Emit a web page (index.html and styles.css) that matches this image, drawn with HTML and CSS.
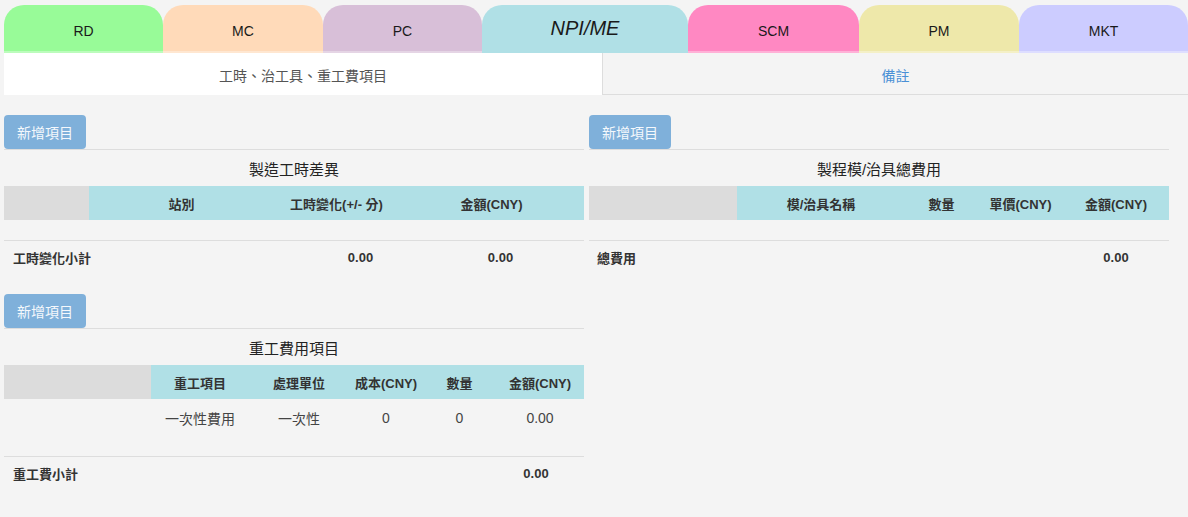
FILE: index.html
```html
<!DOCTYPE html>
<html lang="zh-Hant">
<head>
<meta charset="utf-8">
<title>NPI/ME</title>
<link rel="stylesheet" href="styles.css">
</head>
<body>
<div class="page">
  <nav class="dept-tabs">
    <div class="dept-tab rd">RD</div>
    <div class="dept-tab mc">MC</div>
    <div class="dept-tab pc">PC</div>
    <div class="dept-tab npi active">NPI/ME</div>
    <div class="dept-tab scm">SCM</div>
    <div class="dept-tab pm">PM</div>
    <div class="dept-tab mkt">MKT</div>
  </nav>
  <div class="sub-tabs">
    <div class="sub-tab current">工時、治工具、重工費項目</div>
    <div class="sub-tab other">備註</div>
  </div>
  <main class="content">
    <section class="col">
      <div class="block">
        <button class="add-btn">新增項目</button>
        <div class="table-box">
          <div class="table-title">製造工時差異</div>
          <div class="thead t1">
            <div class="cell gray"></div>
            <div class="cell">站別</div>
            <div class="cell">工時變化(+/- 分)</div>
            <div class="cell">金額(CNY)</div>
          </div>
          <div class="spacer"></div>
          <div class="tfoot f1">
            <div class="label">工時變化小計</div>
            <div class="val">0.00</div>
            <div class="val">0.00</div>
          </div>
        </div>
      </div>
      <div class="block">
        <button class="add-btn">新增項目</button>
        <div class="table-box">
          <div class="table-title">重工費用項目</div>
          <div class="thead t3">
            <div class="cell gray"></div>
            <div class="cell">重工項目</div>
            <div class="cell">處理單位</div>
            <div class="cell">成本(CNY)</div>
            <div class="cell">數量</div>
            <div class="cell">金額(CNY)</div>
          </div>
          <div class="trow t3">
            <div class="cell"></div>
            <div class="cell">一次性費用</div>
            <div class="cell">一次性</div>
            <div class="cell">0</div>
            <div class="cell">0</div>
            <div class="cell">0.00</div>
          </div>
          <div class="spacer short"></div>
          <div class="tfoot f3">
            <div class="label">重工費小計</div>
            <div class="val">0.00</div>
          </div>
        </div>
      </div>
    </section>
    <section class="col">
      <div class="block">
        <button class="add-btn">新增項目</button>
        <div class="table-box">
          <div class="table-title">製程模/治具總費用</div>
          <div class="thead t2">
            <div class="cell gray"></div>
            <div class="cell">模/治具名稱</div>
            <div class="cell">數量</div>
            <div class="cell">單價(CNY)</div>
            <div class="cell">金額(CNY)</div>
          </div>
          <div class="spacer"></div>
          <div class="tfoot t2">
            <div class="label span4">總費用</div>
            <div class="val">0.00</div>
          </div>
        </div>
      </div>
    </section>
  </main>
</div>
</body>
</html>
```
FILE: styles.css
```css
* { box-sizing: border-box; }

body {
  margin: 0;
  background: #f4f4f4;
  font-family: "Liberation Sans", "Noto Sans CJK TC", sans-serif;
  color: #333;
}

.page { padding: 5px 0 0 4px; }

.dept-tabs { display: flex; height: 48px; }

.dept-tab {
  display: flex;
  align-items: center;
  justify-content: center;
  padding-top: 4px;
  border-radius: 20px 20px 0 0;
  font-size: 14px;
  color: #1a1a1a;
  box-shadow: inset 0 -2px 0 rgba(255, 255, 255, 0.35);
}
.dept-tab.rd { flex: 0 0 159px; background: #98fb98; }
.dept-tab.mc { flex: 0 0 160px; background: #ffdab9; }
.dept-tab.pc { flex: 0 0 159px; background: #d8bfd8; }
.dept-tab.npi {
  flex: 0 0 206px;
  background: #b0e0e6;
  font-size: 20px;
  font-style: italic;
  padding-top: 0;
  padding-bottom: 2px;
  box-shadow: none;
}
.dept-tab.scm { flex: 0 0 171px; background: #ff88c2; }
.dept-tab.pm { flex: 0 0 160px; background: #eee8aa; }
.dept-tab.mkt { flex: 0 0 169px; background: #ccccff; }

.sub-tabs { display: flex; height: 42px; }
.sub-tab {
  display: flex;
  align-items: center;
  justify-content: center;
  font-size: 14px;
  padding-top: 2px;
}
.sub-tab.current {
  flex: 0 0 599px;
  background: #fff;
  color: #555;
  border-right: 1px solid #ddd;
}
.sub-tab.other {
  flex: 1;
  color: #4a90d6;
  border-bottom: 1px solid #ddd;
}

.content {
  display: grid;
  grid-template-columns: 580px 580px;
  column-gap: 5px;
  padding-top: 20px;
  align-items: start;
}

.block { margin-bottom: 21px; }

.add-btn {
  display: block;
  width: 82px;
  height: 34px;
  padding: 0;
  border: 0;
  border-radius: 4px;
  background: #7fb0da;
  color: #f4f8fc;
  font-family: "Liberation Sans", "Noto Sans CJK TC", sans-serif;
  font-size: 14px;
}

.table-box { border-top: 1px solid #ddd; }

.table-title {
  height: 36px;
  display: flex;
  align-items: center;
  justify-content: center;
  font-size: 15px;
  color: #222;
}

.thead, .trow, .tfoot { display: grid; }

.thead {
  height: 34px;
  background: #b0e0e6;
  font-size: 13px;
  font-weight: bold;
  color: #333;
}
.cell {
  display: flex;
  align-items: center;
  justify-content: center;
  white-space: nowrap;
}
.cell.gray { background: #dcdcdc; }

.t1 { grid-template-columns: 85px 185px 125px 1fr; }
.t2 { grid-template-columns: 148px 168px 73px 85px 1fr; }
.t3 { grid-template-columns: 147px 98px 100px 74px 73px 1fr; }

.trow {
  height: 38px;
  font-size: 14px;
  color: #444;
}

.spacer { height: 21px; border-bottom: 1px solid #ddd; }
.spacer.short { height: 20px; }

.tfoot {
  height: 32px;
  align-items: center;
  font-size: 13px;
  font-weight: bold;
  color: #333;
}
.tfoot .label { padding-left: 9px; }
.tfoot .span4 { grid-column: 1 / span 4; padding-left: 8px; }
.tfoot .val { text-align: center; }

.f1 { grid-template-columns: 300px 113px 1fr; }
.f3 { grid-template-columns: 1fr 96px; }
```
